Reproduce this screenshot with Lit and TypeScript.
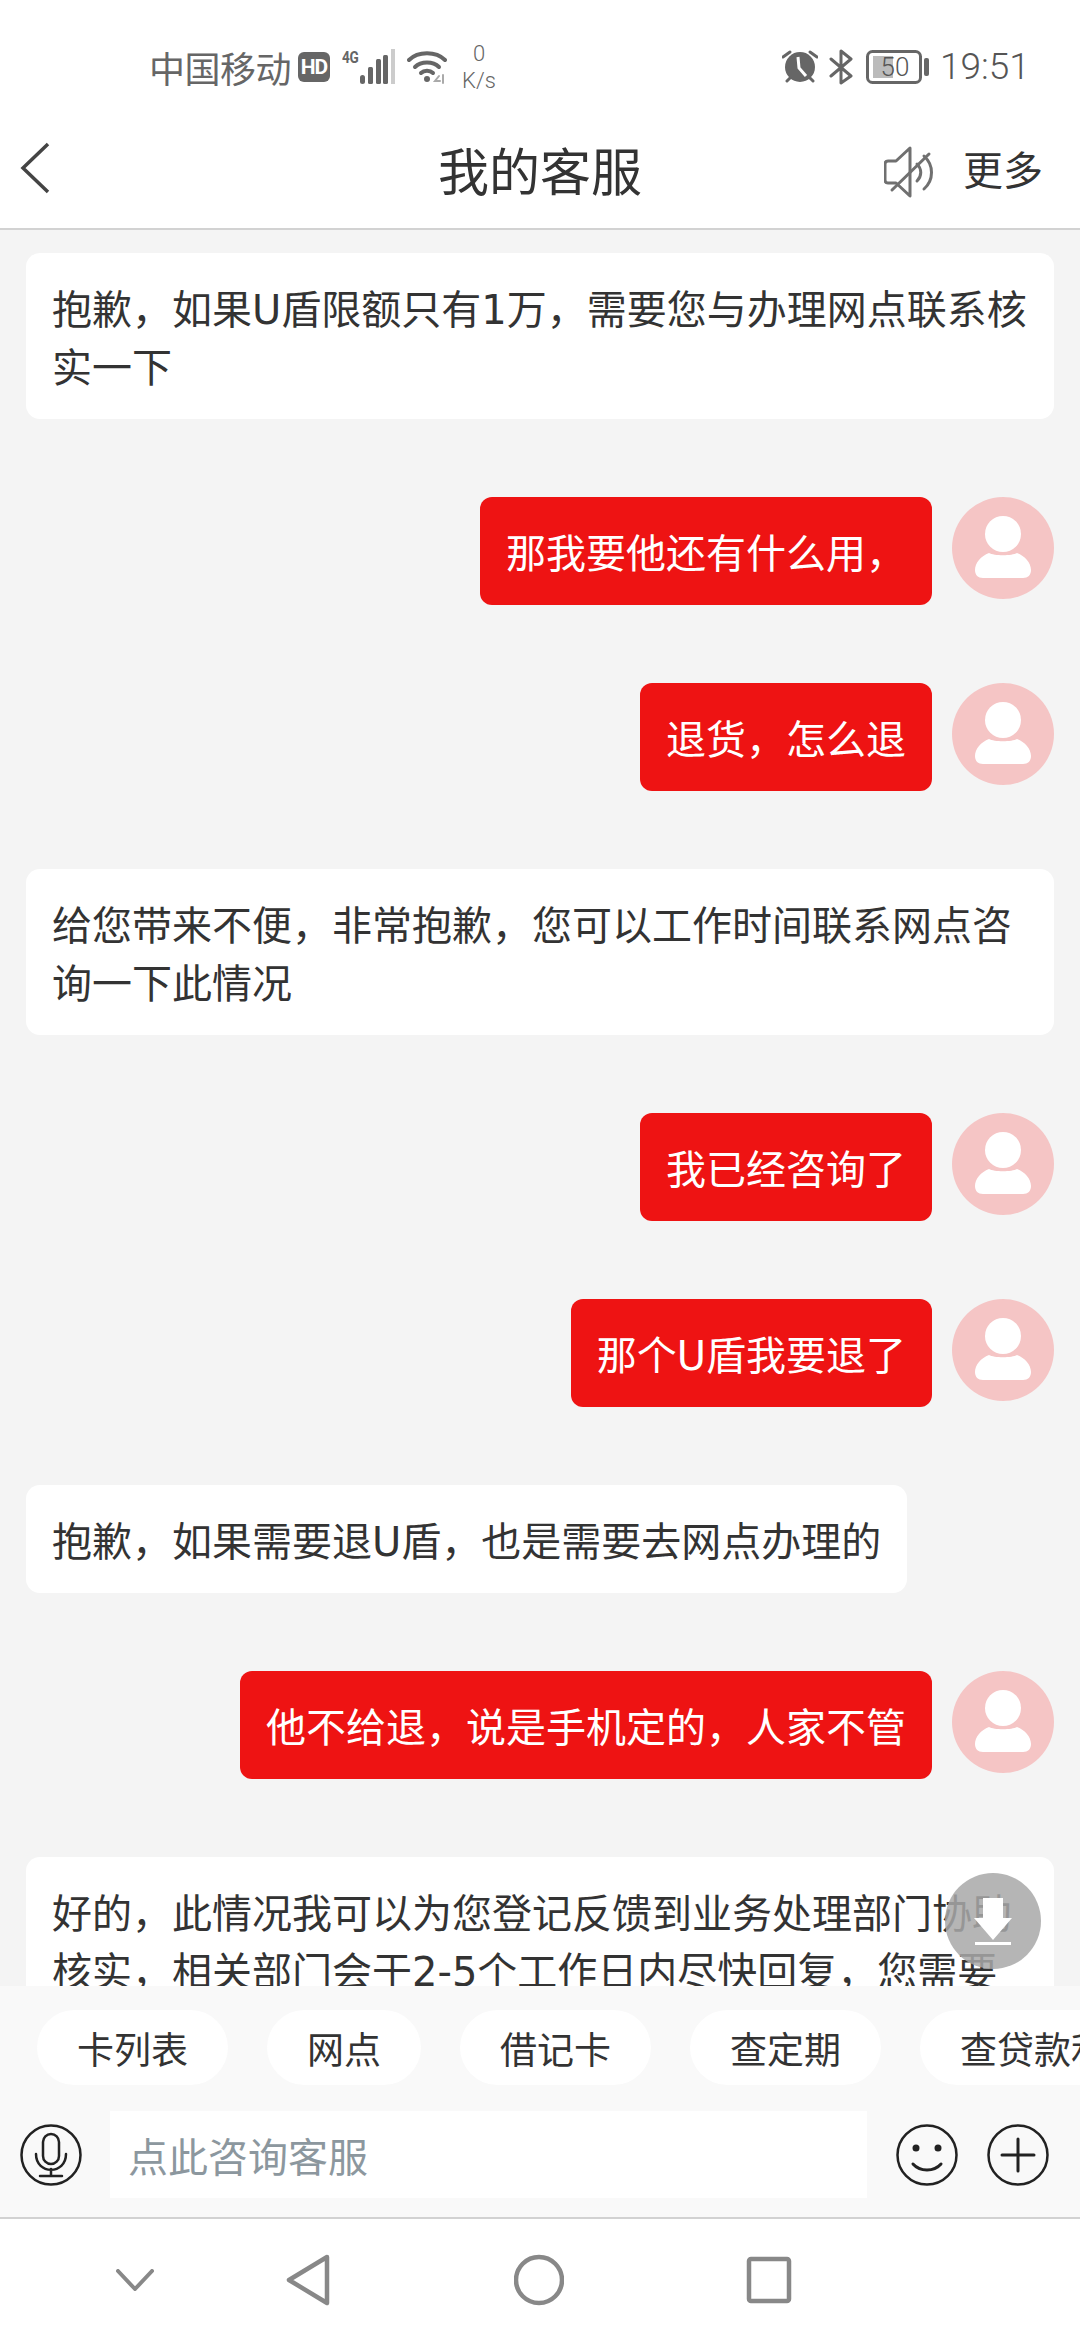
import { LitElement, html, css, svg } from "lit";
import { customElement } from "lit/decorators.js";

type Msg = { me: boolean; text: string };

const MSGS: Msg[] = [
  { me: false, text: "抱歉，如果U盾限额只有1万，需要您与办理网点联系核实一下" },
  { me: true, text: "那我要他还有什么用，" },
  { me: true, text: "退货，怎么退" },
  { me: false, text: "给您带来不便，非常抱歉，您可以工作时间联系网点咨询一下此情况" },
  { me: true, text: "我已经咨询了" },
  { me: true, text: "那个U盾我要退了" },
  { me: false, text: "抱歉，如果需要退U盾，也是需要去网点办理的" },
  { me: true, text: "他不给退，说是手机定的，人家不管" },
  { me: false, text: "好的，此情况我可以为您登记反馈到业务处理部门协助核实，相关部门会于2-5个工作日内尽快回复，您需要" },
];

const CHIPS = ["卡列表", "网点", "借记卡", "查定期", "查贷款利率"];

const avatar = svg`<svg class="avatar" viewBox="0 0 102 102">
  <circle cx="51" cy="51" r="51" fill="#f5c5c5"/>
  <circle cx="51" cy="37" r="18" fill="#fff"/>
  <path d="M37 56 C42 59 60 59 65 56 C73 59 79 66 79 73 C79 78 76 81 71 81 L31 81 C26 81 23 78 23 73 C23 66 29 59 37 56 Z" fill="#fff"/>
</svg>`;

@customElement("app-root")
export class AppRoot extends LitElement {
  static styles = css`
    :host {
      display: flex;
      flex-direction: column;
      width: 1080px;
      height: 2340px;
      position: relative;
      overflow: hidden;
      background: #f4f4f4;
      font-family: "Noto Sans CJK SC", sans-serif;
      color: #333;
    }
    .top { background: #fff; border-bottom: 2px solid #d2d2d2; height: 230px; box-sizing: border-box; flex: none; }
    .status { height: 115px; box-sizing: border-box; padding: 44px 0 25px; display: flex; align-items: center; color: #666; }
    .carrier { margin-left: 149px; font-size: 36px; line-height: 46px; width: 149px; letter-spacing: -0.5px; padding-bottom: 1px; }
    .hd { width: 32px; height: 30px; border-radius: 6px; background: #666; color: #fff; font: 700 21px/30px "Roboto", sans-serif; text-align: center; letter-spacing: -1px; }
    .g4 { margin-left: 12px; width: 18px; font: 700 17px/16px "Roboto", sans-serif; align-self: flex-start; margin-top: 5px; letter-spacing: -0.5px; transform: scaleX(0.8); transform-origin: left; }
    .signal { width: 36px; height: 36px; }
    .wifi { width: 40px; height: 34px; margin-left: 11px; }
    .speed { width: 40px; margin-left: 12px; text-align: center; font: 300 22px/27px "Roboto", sans-serif; color: #666; }
    .alarm { width: 36px; height: 34px; margin-left: 283px; }
    .bt { width: 24px; height: 36px; margin-left: 11px; }
    .battery { position: relative; width: 64px; height: 34px; margin-left: 13px; }
    .battery svg { width: 64px; height: 34px; display: block; }
    .battery span { position: absolute; left: 6px; top: 0; width: 46px; text-align: center; font: 300 26px/34px "Roboto", sans-serif; color: #555; }
    .time { margin-left: 10px; font: 300 37px/46px "Roboto", sans-serif; color: #555; }

    .nav { height: 113px; position: relative; display: flex; align-items: center; justify-content: center; }
    .title { font-size: 51px; line-height: 113px; color: #333; padding-bottom: 4px; }
    .back { position: absolute; left: 20px; top: 27px; width: 30px; height: 52px; }
    .actions { position: absolute; right: 37px; top: 0; height: 113px; display: flex; align-items: center; gap: 27px; }
    .speaker { width: 52px; height: 52px; }
    .more { font-size: 40px; color: #333; line-height: 113px; padding-bottom: 7px; }

    .list { flex: 1; min-height: 0; overflow: hidden; padding: 23px 26px 0; display: flex; flex-direction: column; gap: 78px; box-sizing: border-box; }
    .row { display: flex; flex: none; align-items: flex-start; }
    .row.me { justify-content: flex-end; gap: 20px; }
    .bubble { font: 400 40px/58px "DejaVu Sans", "Noto Sans CJK SC", sans-serif; padding: 28px 26px 22px; border-radius: 14px; box-sizing: border-box; }
    .bubble.them { background: #fff; color: #333; }
    .bubble.me { background: #ee1313; color: #fff; border-radius: 12px; }
    .avatar { width: 102px; height: 102px; flex: none; }

    .fab { position: absolute; left: 945px; top: 1873px; width: 96px; height: 96px; }

    .panel { height: 231px; background: #f9f9f9; flex: none; box-sizing: border-box; padding-top: 24px; }
    .chips { display: flex; gap: 39px; padding-left: 37px; overflow: hidden; height: 75px; }
    .chip { flex: none; background: #fff; border-radius: 38px; padding: 2px 40px 0; height: 75px; box-sizing: border-box; font-size: 37px; line-height: 73px; color: #333; }
    .inputs { display: flex; align-items: center; margin-top: 26px; height: 87px; }
    .ic { width: 62px; height: 62px; flex: none; }
    .mic { margin-left: 20px; }
    .field { margin-left: 28px; width: 757px; height: 87px; background: #fff; box-sizing: border-box; padding: 2px 0 0 18px; font-size: 40px; line-height: 85px; color: #8c979e; }
    .smile { margin-left: 29px; }
    .plus { margin-left: 29px; }

    .sys { height: 123px; flex: none; background: #fff; border-top: 2px solid #d2d2d2; box-sizing: border-box; display: flex; align-items: center; padding-left: 116px; }
    .sys svg { flex: none; display: block; }
    .chev { width: 38px; height: 22px; }
    .tri { width: 44px; height: 52px; margin-left: 132px; }
    .circ { width: 50px; height: 52px; margin-left: 184px; }
    .sq { width: 46px; height: 48px; margin-left: 182px; }
  `;

  render() {
    return html`
      <div class="top">
        <div class="status">
          <span class="carrier">中国移动</span>
          <span class="hd">HD</span>
          <span class="g4">4G</span>
          <svg class="signal" viewBox="0 0 36 36" fill="#666">
            <rect x="0" y="26" width="5" height="9" rx="2.5"/>
            <rect x="8" y="18" width="5" height="17" rx="1.5"/>
            <rect x="16" y="10" width="5" height="25" rx="1.5"/>
            <rect x="23" y="6" width="5" height="29" rx="1.5"/>
            <rect x="31" y="0" width="4" height="35" fill="#ccc"/>
          </svg>
          <svg class="wifi" viewBox="0 0 40 34" fill="none" stroke="#666" stroke-width="4" stroke-linecap="round">
            <path d="M2 10 C11 1 29 1 38 10"/>
            <path d="M8 17 C14 11 26 11 32 17"/>
            <path d="M14 23 C17 20 23 20 26 23"/>
            <circle cx="20" cy="29" r="3" fill="#666" stroke="none"/>
            <path d="M32 26 L28 31 L33 31 M36 25 L36 33" stroke="#aaa" stroke-width="2"/>
          </svg>
          <div class="speed">0<br />K/s</div>
          <svg class="alarm" viewBox="0 0 36 34">
            <circle cx="18" cy="17" r="15" fill="#666"/>
            <path d="M1 7 L8 2 M35 7 L28 2 M5 31 L8 28 M31 31 L28 28" stroke="#666" stroke-width="3" stroke-linecap="round"/>
            <path d="M16 7 L17 18 L24 26" fill="none" stroke="#fff" stroke-width="3"/>
          </svg>
          <svg class="bt" viewBox="0 0 24 36" fill="none" stroke="#666" stroke-width="3" stroke-linejoin="round" stroke-linecap="round">
            <path d="M2 10 L22 27 L12 34 L12 2 L22 10 L2 27"/>
          </svg>
          <div class="battery">
            <svg viewBox="0 0 64 34">
              <rect x="7" y="6" width="20" height="22" fill="#bbb"/>
              <rect x="1.5" y="1.5" width="53" height="31" rx="5" fill="none" stroke="#666" stroke-width="3"/>
              <rect x="58" y="8" width="5" height="18" rx="2" fill="#666"/>
            </svg>
            <span>50</span>
          </div>
          <span class="time">19:51</span>
        </div>
        <div class="nav">
          <svg class="back" viewBox="0 0 30 52" fill="none" stroke="#444" stroke-width="3.5">
            <path d="M28 2 L3 26 L28 50"/>
          </svg>
          <span class="title">我的客服</span>
          <div class="actions">
            <svg class="speaker" viewBox="0 0 52 52" fill="none" stroke="#707070" stroke-width="3" stroke-linejoin="round" stroke-linecap="round">
              <path d="M26 2 L12 15 L4 15 C2 15 1 16 1 18 L1 34 C1 36 2 37 4 37 L12 37 L26 50 Z"/>
              <path d="M33 18 C38 23 38 30 33 35"/>
              <path d="M40 10 C50 19 50 34 40 43"/>
              <path d="M8 44 L45 8"/>
            </svg>
            <span class="more">更多</span>
          </div>
        </div>
      </div>
      <div class="list">
        ${MSGS.map((m) =>
          m.me
            ? html`<div class="row me"><div class="bubble me">${m.text}</div>${avatar}</div>`
            : html`<div class="row"><div class="bubble them">${m.text}</div></div>`
        )}
      </div>
      <svg class="fab" viewBox="0 0 96 96">
        <circle cx="48" cy="48" r="48" fill="#a8a8a8" fill-opacity="0.85"/>
        <path d="M38 25 L58 25 L58 45 L67 45 L48 67 L29 45 L38 45 Z" fill="#fff"/>
        <rect x="30" y="69" width="36" height="3" fill="#fff"/>
      </svg>
      <div class="panel">
        <div class="chips">${CHIPS.map((c) => html`<span class="chip">${c}</span>`)}</div>
        <div class="inputs">
          <svg class="ic mic" viewBox="0 0 62 62" fill="none" stroke="#222" stroke-width="2.5" stroke-linecap="round">
            <circle cx="31" cy="31" r="29.5"/>
            <rect x="23" y="10" width="16" height="30" rx="8"/>
            <path d="M16 30 C16 51 46 51 46 30 M31 45 L31 52 M20 52 L42 52"/>
          </svg>
          <div class="field">点此咨询客服</div>
          <svg class="ic smile" viewBox="0 0 62 62" fill="none" stroke="#222" stroke-width="2.5" stroke-linecap="round">
            <circle cx="31" cy="31" r="29.5"/>
            <circle cx="20" cy="24" r="3.5" fill="#222" stroke="none"/>
            <circle cx="42" cy="24" r="3.5" fill="#222" stroke="none"/>
            <path d="M17 40 C24 48 38 48 45 40" stroke-width="3"/>
          </svg>
          <svg class="ic plus" viewBox="0 0 62 62" fill="none" stroke="#222" stroke-width="2.5" stroke-linecap="round">
            <circle cx="31" cy="31" r="29.5"/>
            <path d="M15 31 L47 31 M31 15 L31 47" stroke-width="3"/>
          </svg>
        </div>
      </div>
      <div class="sys">
        <svg class="chev" viewBox="0 0 38 22" fill="none" stroke="#888" stroke-width="4" stroke-linecap="round" stroke-linejoin="round">
          <path d="M2 2 L19 20 L36 2"/>
        </svg>
        <svg class="tri" viewBox="0 0 44 52" fill="none" stroke="#888" stroke-width="4.5" stroke-linejoin="round">
          <path d="M41 3 L3 26 L41 49 Z"/>
        </svg>
        <svg class="circ" viewBox="0 0 50 52" fill="none" stroke="#888" stroke-width="4.5">
          <circle cx="25" cy="26" r="23"/>
        </svg>
        <svg class="sq" viewBox="0 0 46 48" fill="none" stroke="#888" stroke-width="4.5" stroke-linejoin="round">
          <rect x="3" y="3" width="40" height="42" rx="2"/>
        </svg>
      </div>
    `;
  }
}
